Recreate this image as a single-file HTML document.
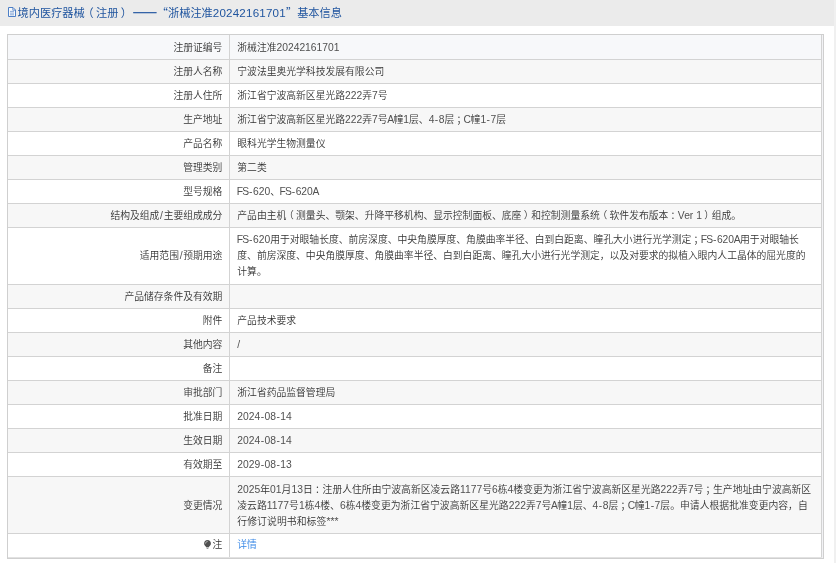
<!DOCTYPE html><html lang="zh-CN"><head><meta charset="utf-8"><title>境内医疗器械（注册）基本信息</title><style>
html,body{margin:0;padding:0;}
body{width:836px;height:563px;overflow:hidden;background:#fff;position:relative;
 font-family:"Liberation Sans","Noto Sans CJK SC",sans-serif;color:#333;font-weight:350;}
#wrap{position:absolute;left:0;top:0;width:836px;height:563px;will-change:transform;}
#strip{position:absolute;left:834px;top:0;width:2px;height:563px;background:#f0f0f0;}
#hd{position:absolute;left:0;top:0;width:834px;height:25.5px;background:#ebebeb;}
#hd .t{position:absolute;left:17.6px;top:0;height:25px;line-height:24.4px;font-size:11.2px;color:#20559f;white-space:nowrap;font-weight:400;}
#hd .t .l{font-size:11.6px;letter-spacing:0.2px;color:#20559f;}
#hd .q{font-family:"Noto Sans CJK SC",sans-serif;}
#hd .ds{-webkit-text-stroke:0.45px #20559f;margin-left:2.9px;margin-right:-0.4px;font-size:12.4px;font-weight:700;position:relative;top:0.9px;font-family:"Noto Sans CJK SC",sans-serif;}
#hd svg{position:absolute;left:8px;top:7px;}
#tb{position:absolute;left:7px;top:34px;width:817px;height:525px;border:1px solid #cfcfcf;box-sizing:border-box;background:#f2f2f5;}
.r{position:absolute;left:8px;width:814px;border-bottom:1px solid #d3d3d3;box-sizing:border-box;background:#fff;}
.r .a{position:absolute;left:0;top:0;bottom:0;width:221px;border-right:1px solid #d3d3d3;}
.r .b{position:absolute;left:222px;top:0;bottom:0;right:0;border-right:1px solid #d3d3d3;}
.lab{position:absolute;right:6.6px;white-space:nowrap;font-size:9.8px;line-height:16px;}
.val{position:absolute;left:7.3px;white-space:nowrap;font-size:9.8px;line-height:16px;}
.val div{height:16px;}
.l{font-size:10.3px;color:#505050;}
.h{padding:0 0.45px;}
.u{letter-spacing:-0.9px;margin-left:-0.45px;margin-right:0.45px;}
.lab .l{padding:0 0.7px;}
.p{position:relative;left:2.2px;}
.pl{position:relative;left:-2.3px;}
.pr{position:relative;left:2.3px;}
.e{background:#f7f7f7;}
.z{border-bottom-color:#e2e2e2;}
.f{background:#f7f8fa;}
a{color:#3787e6;text-decoration:none;}
</style></head><body>
<div id="wrap"><div id="strip"></div>
<div id="hd"><svg width="8" height="10" viewBox="0 0 8 10"><path d="M0.5 0.5H5L7.5 3V9.5H0.5Z" fill="#f6f8fb" stroke="#4d7fc6" stroke-width="1"/><path d="M4.8 0.7V3.2H7.3" fill="none" stroke="#4d7fc6" stroke-width="0.8"/><path d="M2 4.4H6M2 6.1H6M2 7.8H6" stroke="#6f97d0" stroke-width="0.8"/></svg><div class="t"><span id="h1">境内医疗器械<span class="pl">（</span>注册<span class="pr">）</span></span><span id="h2" class="ds">——</span><span id="h3" class="q">“</span><span id="h4">浙械注准</span><span id="h5" class="l">20242161701</span><span id="h6" class="q">”</span><span id="h7">基本信息</span></div></div>
<div id="tb"></div>
<div class="r f" style="top:35px;height:25px"><div class="a"><div class="lab" id="l0" style="top:4.7px">注册证编号</div></div><div class="b"><div class="val" style="top:4.7px"><div id="v0_0"><span>浙械注准<span class="l">20242161701</span></span></div></div></div></div>
<div class="r e" style="top:60px;height:24px"><div class="a"><div class="lab" id="l1" style="top:4.2px">注册人名称</div></div><div class="b"><div class="val" style="top:4.2px"><div id="v1_0"><span>宁波法里奥光学科技发展有限公司</span></div></div></div></div>
<div class="r" style="top:84px;height:24px"><div class="a"><div class="lab" id="l2" style="top:3.9px">注册人住所</div></div><div class="b"><div class="val" style="top:3.9px"><div id="v2_0"><span>浙江省宁波高新区星光路<span class="l">222</span>弄<span class="l">7</span>号</span></div></div></div></div>
<div class="r e" style="top:108px;height:24px"><div class="a"><div class="lab" id="l3" style="top:3.9px">生产地址</div></div><div class="b"><div class="val" style="top:3.9px"><div id="v3_0"><span>浙江省宁波高新区星光路<span class="l">222</span>弄<span class="l">7</span>号<span class="l"><span class="u">A</span></span>幢<span class="l">1</span>层、<span class="l">4<span class="h">-</span>8</span>层<span class="p">；</span><span class="l"><span class="u">C</span></span>幢<span class="l">1<span class="h">-</span>7</span>层</span></div></div></div></div>
<div class="r" style="top:132px;height:24px"><div class="a"><div class="lab" id="l4" style="top:3.9px">产品名称</div></div><div class="b"><div class="val" style="top:3.9px"><div id="v4_0"><span>眼科光学生物测量仪</span></div></div></div></div>
<div class="r e" style="top:156px;height:24px"><div class="a"><div class="lab" id="l5" style="top:3.9px">管理类别</div></div><div class="b"><div class="val" style="top:3.9px"><div id="v5_0"><span>第二类</span></div></div></div></div>
<div class="r" style="top:180px;height:24px"><div class="a"><div class="lab" id="l6" style="top:3.9px">型号规格</div></div><div class="b"><div class="val" style="top:3.9px"><div id="v6_0"><span><span class="l"><span class="u">FS</span><span class="h">-</span>620</span>、<span class="l"><span class="u">FS</span><span class="h">-</span>620<span class="u">A</span></span></span></div></div></div></div>
<div class="r e" style="top:204px;height:24px"><div class="a"><div class="lab" id="l7" style="top:3.9px">结构及组成<span class="l">/</span>主要组成成分</div></div><div class="b"><div class="val" style="top:3.9px"><div id="v7_0"><span>产品由主机<span class="pl">（</span>测量头、颚架、升降平移机构、显示控制面板、底座<span class="pr">）</span>和控制测量系统<span class="pl">（</span>软件发布版本<span class="p">：</span><span class="l"><span class="u">V</span>er 1</span><span class="pr">）</span>组成。</span></div></div></div></div>
<div class="r" style="top:228px;height:57px"><div class="a"><div class="lab" id="l8" style="top:20.2px">适用范围<span class="l">/</span>预期用途</div></div><div class="b"><div class="val" style="top:4.0px"><div id="v8_0"><span><span class="l"><span class="u">FS</span><span class="h">-</span>620</span>用于对眼轴长度、前房深度、中央角膜厚度、角膜曲率半径、白到白距离、瞳孔大小进行光学测定<span class="p">；</span><span class="l"><span class="u">FS</span><span class="h">-</span>620<span class="u">A</span></span>用于对眼轴长</span></div><div id="v8_1"><span>度、前房深度、中央角膜厚度、角膜曲率半径、白到白距离、瞳孔大小进行光学测定，以及对要求的拟植入眼内人工晶体的屈光度的</span></div><div id="v8_2"><span>计算。</span></div></div></div></div>
<div class="r e" style="top:285px;height:24px"><div class="a"><div class="lab" id="l9" style="top:3.6px">产品储存条件及有效期</div></div><div class="b"><div class="val" style="top:3.6px"><div id="v9_0"></div></div></div></div>
<div class="r" style="top:309px;height:24px"><div class="a"><div class="lab" id="l10" style="top:3.6px">附件</div></div><div class="b"><div class="val" style="top:3.6px"><div id="v10_0"><span>产品技术要求</span></div></div></div></div>
<div class="r e" style="top:333px;height:24px"><div class="a"><div class="lab" id="l11" style="top:3.6px">其他内容</div></div><div class="b"><div class="val" style="top:3.6px"><div id="v11_0"><span><span class="l">/</span></span></div></div></div></div>
<div class="r" style="top:357px;height:24px"><div class="a"><div class="lab" id="l12" style="top:3.6px">备注</div></div><div class="b"><div class="val" style="top:3.6px"><div id="v12_0"></div></div></div></div>
<div class="r e" style="top:381px;height:24px"><div class="a"><div class="lab" id="l13" style="top:3.9px">审批部门</div></div><div class="b"><div class="val" style="top:3.9px"><div id="v13_0"><span>浙江省药品监督管理局</span></div></div></div></div>
<div class="r" style="top:405px;height:24px"><div class="a"><div class="lab" id="l14" style="top:3.9px">批准日期</div></div><div class="b"><div class="val" style="top:3.9px"><div id="v14_0"><span><span class="l">2024<span class="h">-</span>08<span class="h">-</span>14</span></span></div></div></div></div>
<div class="r e" style="top:429px;height:24px"><div class="a"><div class="lab" id="l15" style="top:4.2px">生效日期</div></div><div class="b"><div class="val" style="top:4.2px"><div id="v15_0"><span><span class="l">2024<span class="h">-</span>08<span class="h">-</span>14</span></span></div></div></div></div>
<div class="r" style="top:453px;height:24px"><div class="a"><div class="lab" id="l16" style="top:4.2px">有效期至</div></div><div class="b"><div class="val" style="top:4.2px"><div id="v16_0"><span><span class="l">2029<span class="h">-</span>08<span class="h">-</span>13</span></span></div></div></div></div>
<div class="r e" style="top:477px;height:57px"><div class="a"><div class="lab" id="l17" style="top:20.7px">变更情况</div></div><div class="b"><div class="val" style="top:4.7px"><div id="v17_0" style="letter-spacing:0.016px"><span><span class="l">2025</span>年<span class="l">01</span>月<span class="l">13</span>日<span class="p">：</span>注册人住所由宁波高新区凌云路<span class="l">1177</span>号<span class="l">6</span>栋<span class="l">4</span>楼变更为浙江省宁波高新区星光路<span class="l">222</span>弄<span class="l">7</span>号<span class="p">；</span>生产地址由宁波高新区</span></div><div id="v17_1" style="letter-spacing:0.030px"><span>凌云路<span class="l">1177</span>号<span class="l">1</span>栋<span class="l">4</span>楼、<span class="l">6</span>栋<span class="l">4</span>楼变更为浙江省宁波高新区星光路<span class="l">222</span>弄<span class="l">7</span>号<span class="l"><span class="u">A</span></span>幢<span class="l">1</span>层、<span class="l">4<span class="h">-</span>8</span>层<span class="p">；</span><span class="l"><span class="u">C</span></span>幢<span class="l">1<span class="h">-</span>7</span>层。申请人根据批准变更内容，自</span></div><div id="v17_2" style="letter-spacing:0.100px"><span>行修订说明书和标签<span class="l">***</span></span></div></div></div></div>
<div class="r z" style="top:534px;height:24px"><div class="a"><div class="lab" id="l18" style="top:3.2px"><svg class="bulb" width="7" height="9.2" viewBox="0 0 7 9.2" style="vertical-align:-1.2px;margin-right:1.8px"><path d="M3.5 0.1C1.5 0.1 0.1 1.6 0.1 3.5C0.1 4.8 0.8 5.6 1.5 6.2C1.9 6.6 2.1 6.9 2.1 7.2H4.9C4.9 6.9 5.1 6.6 5.5 6.2C6.2 5.6 6.9 4.8 6.9 3.5C6.9 1.6 5.5 0.1 3.5 0.1Z" fill="#505050"/><path d="M2.2 7.7H4.8" stroke="#b5b5b5" stroke-width="0.8"/><path d="M2.7 8.7H4.3" stroke="#6a6a6a" stroke-width="0.8"/><path d="M1.6 3.2C1.7 2.2 2.4 1.5 3.3 1.4" fill="none" stroke="#e8e8e8" stroke-width="0.7" stroke-linecap="round"/></svg>注</div></div><div class="b"><div class="val" style="top:3.2px"><div id="v18_0"><a>详情</a></div></div></div></div>
</div></body></html>
